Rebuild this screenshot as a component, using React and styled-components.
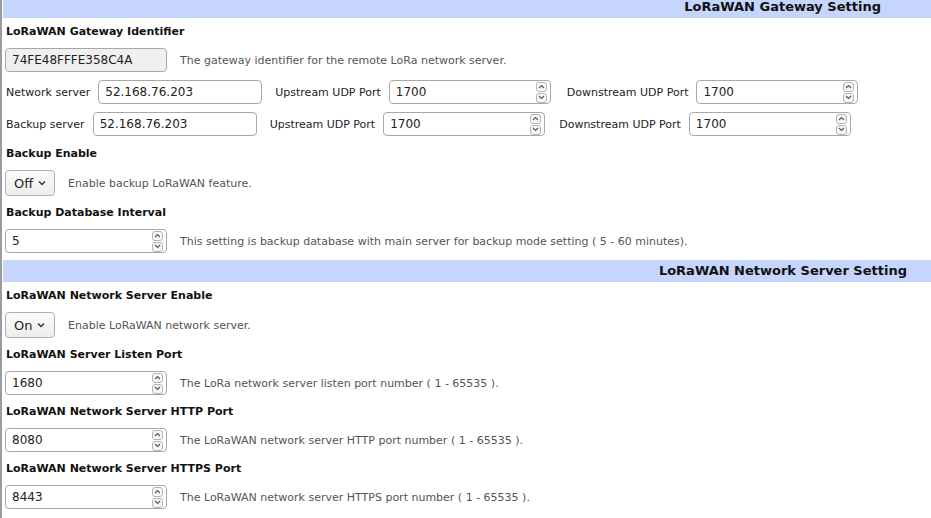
import React from "react";
import styled, { createGlobalStyle } from "styled-components";

const Global = createGlobalStyle`
    html, body{
        margin: 0;
        padding: 0;
        background: #ffffff;
        overflow: hidden;
    }
    body{
        font-family: "DejaVu Sans", Verdana, sans-serif;
        font-size: 11px;
        color: #222;
    }
`

const Chevron = ({ up }) => (
    <svg width="7" height="5" viewBox="0 0 7 5">
        <path d={up ? "M1 4 L3.5 1.5 L6 4" : "M1 1 L3.5 3.5 L6 1"} fill="none" stroke="#555" strokeWidth="1.1" />
    </svg>
)

const NumberBox = ({ value }) => (
    <Input $number>
        <input defaultValue={value} readOnly />
        <Spinner>
            <span><Chevron up /></span>
            <span><Chevron /></span>
        </Spinner>
    </Input>
)

const Select = ({ value }) => (
    <SelectBox>
        {value}
        <svg width="8" height="6" viewBox="0 0 8 6">
            <path d="M1 1.5 L4 4.5 L7 1.5" fill="none" stroke="#333" strokeWidth="1.5" />
        </svg>
    </SelectBox>
)

const App = () => {
    return (
        <>
            <Global />
            <Page>
                <Heading $pr={50} $first>LoRaWAN Gateway Setting</Heading>

                <Label $top={6}>LoRaWAN Gateway Identifier</Label>
                <Row>
                    <Input $readonly $w={162}><input defaultValue="74FE48FFFE358C4A" readOnly /></Input>
                    <Desc>The gateway identifier for the remote LoRa network server.</Desc>
                </Row>

                <Row>
                    <Caption>Network server</Caption>
                    <Input $w={164}><input defaultValue="52.168.76.203" readOnly /></Input>
                    <Caption $ml={13}>Upstream UDP Port</Caption>
                    <NumberBox value="1700" />
                    <Caption $ml={16}>Downstream UDP Port</Caption>
                    <NumberBox value="1700" />
                </Row>

                <Row>
                    <Caption>Backup server</Caption>
                    <Input $w={164}><input defaultValue="52.168.76.203" readOnly /></Input>
                    <Caption $ml={13}>Upstream UDP Port</Caption>
                    <NumberBox value="1700" />
                    <Caption $ml={14}>Downstream UDP Port</Caption>
                    <NumberBox value="1700" />
                </Row>

                <Label $top={10}>Backup Enable</Label>
                <Row>
                    <Select value="Off" />
                    <Desc>Enable backup LoRaWAN feature.</Desc>
                </Row>

                <Label>Backup Database Interval</Label>
                <Row>
                    <NumberBox value="5" />
                    <Desc>This setting is backup database with main server for backup mode setting ( 5 - 60 minutes).</Desc>
                </Row>

                <Heading $pr={24}>LoRaWAN Network Server Setting</Heading>

                <Label $top={6}>LoRaWAN Network Server Enable</Label>
                <Row>
                    <Select value="On" />
                    <Desc>Enable LoRaWAN network server.</Desc>
                </Row>

                <Label>LoRaWAN Server Listen Port</Label>
                <Row>
                    <NumberBox value="1680" />
                    <Desc>The LoRa network server listen port number ( 1 - 65535 ).</Desc>
                </Row>

                <Label>LoRaWAN Network Server HTTP Port</Label>
                <Row>
                    <NumberBox value="8080" />
                    <Desc>The LoRaWAN network server HTTP port number ( 1 - 65535 ).</Desc>
                </Row>

                <Label>LoRaWAN Network Server HTTPS Port</Label>
                <Row>
                    <NumberBox value="8443" />
                    <Desc>The LoRaWAN network server HTTPS port number ( 1 - 65535 ).</Desc>
                </Row>
            </Page>
        </>
    )
}

const Page = styled.div`
    border-left: 2px solid #9c9c9c;
    padding: 0 0 20px 3px;
    margin-top: -4px;
    min-height: 560px;
`

const Heading = styled.div`
    margin: ${p => p.$first ? "0" : "7px"} 0 0 -2px;
    height: 22px;
    line-height: 22px;
    background-color: #c6d5fb;
    text-align: right;
    padding-right: ${p => p.$pr}px;
    font-size: 13px;
    font-weight: bold;
    color: #111;
`

const Label = styled.div`
    margin-top: ${p => p.$top || 9}px;
    padding-left: 1px;
    height: 16px;
    line-height: 16px;
    font-size: 11px;
    font-weight: bold;
    color: #111;
`

const Row = styled.div`
    display: flex;
    align-items: center;
    margin-top: 8px;
`

const Caption = styled.span`
    margin-left: ${p => p.$ml || 1}px;
    margin-right: 8px;
    font-size: 11px;
    color: #222;
    white-space: nowrap;
`

const Desc = styled.span`
    margin-left: 13px;
    font-size: 11px;
    color: #555;
    white-space: nowrap;
`

const Input = styled.div`
    display: flex;
    align-items: center;
    box-sizing: border-box;
    width: ${p => p.$w || 162}px;
    height: 24px;
    border: 1px solid #a8a8a8;
    border-radius: 4px;
    background: ${p => p.$readonly ? "#f0f0f0" : "#ffffff"};
    padding: 0 3px 0 6px;

    input{
        flex: 1;
        min-width: 0;
        border: none;
        outline: none;
        background: transparent;
        padding: 0;
        font-family: "DejaVu Sans", Verdana, sans-serif;
        font-size: 12px;
        color: #222;
    }
`

const Spinner = styled.div`
    display: flex;
    flex-direction: column;
    gap: 1px;

    span{
        display: flex;
        align-items: center;
        justify-content: center;
        width: 9px;
        height: 8px;
        border: 1px solid #b5b5b5;
        border-radius: 3px;
        background: #f7f7f7;
    }
`

const SelectBox = styled.div`
    display: flex;
    align-items: center;
    gap: 5px;
    box-sizing: border-box;
    width: 50px;
    height: 26px;
    padding-left: 8px;
    border: 1px solid #b0b0b0;
    border-radius: 4px;
    background: linear-gradient(#fbfbfb, #ededed);
    font-size: 13px;
    color: #222;
`

export default App;
